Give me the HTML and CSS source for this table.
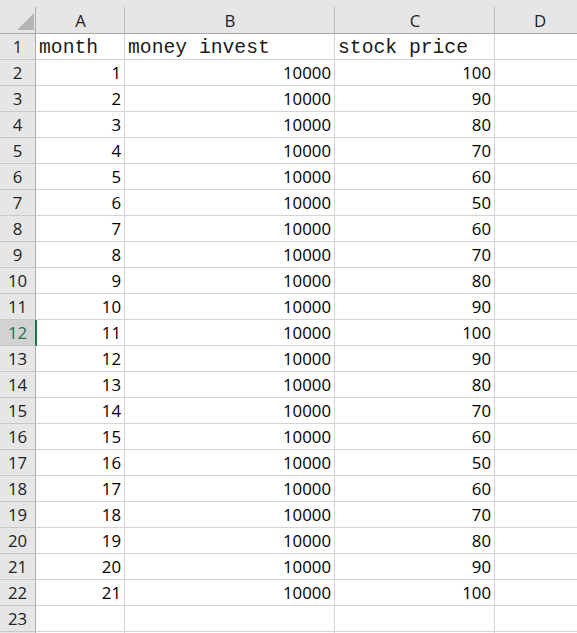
FILE: index.html
```html
<!DOCTYPE html>
<html>
<head>
<meta charset="utf-8">
<link rel="stylesheet" href="styles.css">
</head>
<body>
<div class="sheet">
  <div class="corner"><span class="tri"></span></div>
  <div class="colhead">A</div><div class="colhead">B</div><div class="colhead">C</div><div class="colhead">D</div>

  <div class="rowhead">1</div><div class="cell txt">month</div><div class="cell txt">money invest</div><div class="cell txt">stock price</div><div class="cell"></div>
  <div class="rowhead">2</div><div class="cell num">1</div><div class="cell num">10000</div><div class="cell num">100</div><div class="cell"></div>
  <div class="rowhead">3</div><div class="cell num">2</div><div class="cell num">10000</div><div class="cell num">90</div><div class="cell"></div>
  <div class="rowhead">4</div><div class="cell num">3</div><div class="cell num">10000</div><div class="cell num">80</div><div class="cell"></div>
  <div class="rowhead">5</div><div class="cell num">4</div><div class="cell num">10000</div><div class="cell num">70</div><div class="cell"></div>
  <div class="rowhead">6</div><div class="cell num">5</div><div class="cell num">10000</div><div class="cell num">60</div><div class="cell"></div>
  <div class="rowhead">7</div><div class="cell num">6</div><div class="cell num">10000</div><div class="cell num">50</div><div class="cell"></div>
  <div class="rowhead">8</div><div class="cell num">7</div><div class="cell num">10000</div><div class="cell num">60</div><div class="cell"></div>
  <div class="rowhead">9</div><div class="cell num">8</div><div class="cell num">10000</div><div class="cell num">70</div><div class="cell"></div>
  <div class="rowhead">10</div><div class="cell num">9</div><div class="cell num">10000</div><div class="cell num">80</div><div class="cell"></div>
  <div class="rowhead">11</div><div class="cell num">10</div><div class="cell num">10000</div><div class="cell num">90</div><div class="cell"></div>
  <div class="rowhead selected">12</div><div class="cell num">11</div><div class="cell num">10000</div><div class="cell num">100</div><div class="cell"></div>
  <div class="rowhead">13</div><div class="cell num">12</div><div class="cell num">10000</div><div class="cell num">90</div><div class="cell"></div>
  <div class="rowhead">14</div><div class="cell num">13</div><div class="cell num">10000</div><div class="cell num">80</div><div class="cell"></div>
  <div class="rowhead">15</div><div class="cell num">14</div><div class="cell num">10000</div><div class="cell num">70</div><div class="cell"></div>
  <div class="rowhead">16</div><div class="cell num">15</div><div class="cell num">10000</div><div class="cell num">60</div><div class="cell"></div>
  <div class="rowhead">17</div><div class="cell num">16</div><div class="cell num">10000</div><div class="cell num">50</div><div class="cell"></div>
  <div class="rowhead">18</div><div class="cell num">17</div><div class="cell num">10000</div><div class="cell num">60</div><div class="cell"></div>
  <div class="rowhead">19</div><div class="cell num">18</div><div class="cell num">10000</div><div class="cell num">70</div><div class="cell"></div>
  <div class="rowhead">20</div><div class="cell num">19</div><div class="cell num">10000</div><div class="cell num">80</div><div class="cell"></div>
  <div class="rowhead">21</div><div class="cell num">20</div><div class="cell num">10000</div><div class="cell num">90</div><div class="cell"></div>
  <div class="rowhead">22</div><div class="cell num">21</div><div class="cell num">10000</div><div class="cell num">100</div><div class="cell"></div>
  <div class="rowhead">23</div><div class="cell"></div><div class="cell"></div><div class="cell"></div><div class="cell"></div>
  <div class="rowhead"></div><div class="cell"></div><div class="cell"></div><div class="cell"></div><div class="cell"></div>
</div>
</body>
</html>
```

FILE: styles.css
```css
html, body {
  margin: 0;
  padding: 0;
  background: #ffffff;
  overflow: hidden;
}

.sheet {
  display: grid;
  grid-template-columns: 36px 89px 210px 160px 90px;
  grid-template-rows: 34px;
  grid-auto-rows: 26px;
  font-family: "Open Sans", "Liberation Sans", sans-serif;
  font-size: 16.8px;
  color: #000;
}

.corner {
  background: #e6e6e6;
  border-bottom: 1px solid #ababab;
  background-image: linear-gradient(#ababab, #ababab);
  background-size: 1px 26px;
  background-position: right bottom;
  background-repeat: no-repeat;
  display: flex;
  align-items: flex-end;
  justify-content: flex-end;
  padding: 0 2px 3px 0;
}

.tri {
  width: 17px;
  height: 17px;
  background: #b4b4b4;
  clip-path: polygon(100% 0, 100% 100%, 0 100%);
}

.colhead {
  background-color: #e6e6e6;
  background-image: linear-gradient(#bdbdbd, #bdbdbd);
  background-size: 1px 26px;
  background-position: right bottom;
  background-repeat: no-repeat;
  border-bottom: 1px solid #ababab;
  display: flex;
  align-items: flex-end;
  justify-content: center;
  line-height: 1.36;
  color: #222;
}

.rowhead {
  background: #e6e6e6;
  border-right: 1px solid #ababab;
  border-bottom: 1px solid #c8c8c8;
  display: flex;
  align-items: flex-end;
  justify-content: center;
  line-height: 1.36;
  color: #222;
}

.rowhead.selected {
  background: #d2d2d2;
  color: #217346;
  border-right-color: #217346;
  box-shadow: 1px 0 0 #217346;
  position: relative;
  z-index: 1;
}

.cell {
  border-right: 1px solid #d4d4d4;
  border-bottom: 1px solid #d4d4d4;
  display: flex;
  align-items: flex-end;
  padding: 0 3px;
  line-height: 1.36;
  white-space: nowrap;
}

.num {
  justify-content: flex-end;
}

.txt {
  font-family: "Liberation Mono", "Courier New", monospace;
  font-size: 19.7px;
  line-height: 1.13;
  color: #1a1a1a;
}
```
